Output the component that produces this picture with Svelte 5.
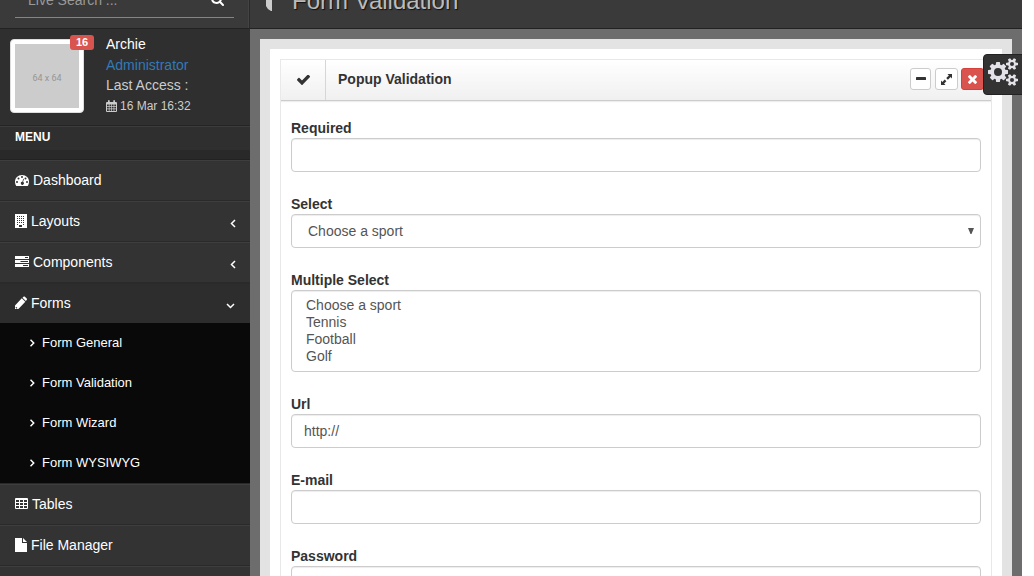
<script>
  const items = [
    { label: 'Dashboard', icon: 'dash', w: 14 },
    { label: 'Layouts', icon: 'building', w: 12, more: true },
    { label: 'Components', icon: 'tasks', w: 14, more: true },
    { label: 'Forms', icon: 'pencil', w: 12, open: true, sub: ['Form General', 'Form Validation', 'Form Wizard', 'Form WYSIWYG'] },
    { label: 'Tables', icon: 'table', w: 13 },
    { label: 'File Manager', icon: 'file', w: 12 },
    { label: '', icon: '', w: 0 }
  ];
  const options = ['Choose a sport', 'Tennis', 'Football', 'Golf'];
  const smallCog = 'v140q0 16-149 31-12 27-30 52 51 113 51 138 0 4-4 7-122 71-124 71-8 0-46-47t-52-68q-20 2-30 2t-30-2q-14 21-52 68t-46 47q-2 0-124-71-4-3-4-7 0-25 51-138-18-25-30-52-149-15-149-31v-140q0-16 149-31 13-29 30-52-51-113-51-138 0-4 4-7 4-2 35-20t59-34 30-16q8 0 46 46.500t52 67.500q20-2 30-2t30 2q51-71 92-112l6-2q4 0 124 70 4 3 4 7 0 25-51 138 17 23 30 52 149 15 149 31z';
  const bigCog = 'M1280 805v185q0 10-7 19.500t-16 10.500l-155 24q-11 35-32 76 34 48 90 115 7 11 7 20 0 12-7 19-23 30-82.500 89.500t-78.500 59.500q-11 0-21-7l-115-90q-37 19-77 31-11 108-23 155-7 24-30 24h-186q-11 0-20-7.500t-10-17.500l-23-153q-34-10-75-31l-118 89q-7 7-20 7-11 0-21-8-144-133-144-160 0-9 7-19 10-14 41-53t47-61q-23-44-35-82l-152-24q-10-1-17-9.500t-7-19.500v-185q0-10 7-19.500t16-10.500l155-24q11-35 32-76-34-48-90-115-7-11-7-20 0-12 7-20 22-30 82-89t79-59q11 0 21 7l115 90q34-18 77-32 11-108 23-154 7-24 30-24h186q11 0 20 7.500t10 17.500l23 153q34 10 75 31l118-89q8-7 20-7 11 0 21 8 144 133 144 160 0 8-7 19-12 16-42 54t-45 60q23 48 34 82l152 23q10 2 17 10.500t7 19.500zM896 896a256 256 0 1 0-512 0a256 256 0 1 0 512 0z';
</script>

{#snippet icon(name, w)}
  <svg class="ico" width={w} height="14" viewBox="0 0 {w} 14">
    {#if name === 'dash'}
      <path fill-rule="evenodd" d="M7 2a7 6.500 0 0 0-7 7c0 1.400.4 2.600 1.100 3.800.1.200.3.200.5.200h10.800c.2 0 .4 0 .5-.2.7-1.200 1.100-2.400 1.100-3.800A7 6.500 0 0 0 7 2zM2 8a1 1 0 1 1 0 2 1 1 0 0 1 0-2zM3.500 4.500a1 1 0 1 1 0 2 1 1 0 0 1 0-2zM7 3a1 1 0 1 1 0 2 1 1 0 0 1 0-2zM10.500 4.500a1 1 0 1 1 0 2 1 1 0 0 1 0-2zM12 8a1 1 0 1 1 0 2 1 1 0 0 1 0-2zM8.200 5.700l.7.200-.8 3.100a1.500 1.500 0 1 1-.7-.2z" />
    {:else if name === 'building'}
      <path fill-rule="evenodd" d="M0 0h12v14H0zM2 2v1h1V2zM4 2v1h1V2zM6 2v1h1V2zM8 2v1h1V2zM2 4v1h1V4zM4 4v1h1V4zM6 4v1h1V4zM8 4v1h1V4zM2 6v1h1V6zM4 6v1h1V6zM6 6v1h1V6zM8 6v1h1V6zM2 8v1h1V8zM4 8v1h1V8zM6 8v1h1V8zM8 8v1h1V8zM2 10v1h1v-1zM8 10v1h1v-1zM4 11v2h3v-2z" />
    {:else if name === 'tasks'}
      <path fill-rule="evenodd" d="M0 1h14v3H0zM10 2v1h3V2zM0 5h14v3H0zM5.500 6v1H13V6zM0 9h14v3H0zM8 10v1h5v-1z" />
    {:else if name === 'pencil'}
      <path fill-rule="evenodd" d="M6.800 2.300l3.500 3.500L3.400 13H0V9.500zM1 10.700l1.400 1.400-.6.500-.8-.1v-.6l-.5-.4zM7.500 1.700l1-1c.4-.4 1-.4 1.400 0L11.700 2.600c.4.400.4 1 0 1.400l-.9 1z" />
    {:else if name === 'table'}
      <path fill-rule="evenodd" d="M1 1h11q1 0 1 1v9q0 1-1 1H1q-1 0-1-1V2q0-1 1-1zM1 3v2h3V3zM5 3v2h3V3zM9 3v2h3V3zM1 6v2h3V6zM5 6v2h3V6zM9 6v2h3V6zM1 9v2h3V9zM5 9v2h3V9zM9 9v2h3V9z" />
    {:else if name === 'file'}
      <path d="M0 0h7v5h5v9H0zM8 0l4 4H8z" />
    {/if}
  </svg>
{/snippet}

<div class="page">
  <aside>
    <div class="search">
      <div class="field"><span>Live Search ...</span>
        <svg width="13" height="13" viewBox="64 128 1664 1664"><path d="M1216 832q0-185-131.500-316.500t-316.500-131.500-316.500 131.500-131.500 316.500 131.500 316.500 316.500 131.500 316.500-131.500 131.500-316.500zm512 832q0 52-38 90t-90 38q-54 0-90-38l-343-342q-179 124-399 124-143 0-273.500-55.500t-225-150-150-225-55.500-273.500 55.500-273.500 150-225 225-150 273.500-55.500 273.500 55.500 225 150 150 225 55.500 273.500q0 220-124 399l343 343q37 37 37 90z" /></svg>
      </div>
    </div>
    <div class="user">
      <div class="thumb"><div>64 x 64</div><b>16</b></div>
      <div class="info">
        <div class="name">Archie</div>
        <div class="role">Administrator</div>
        <div>Last Access :</div>
        <div class="date">
          <svg width="11" height="12" viewBox="0 0 11 12"><path fill-rule="evenodd" d="M1 2h1V.8Q2 0 2.800 0T3.700.8V2h3.600V.8Q7.300 0 8.100 0T9 .8V2h1q1 0 1 1v8q0 1-1 1H1q-1 0-1-1V3q0-1 1-1zM1 4.500v1.600h1.800V4.500zM3.500 4.500v1.600h1.700V4.500zM5.900 4.500v1.600h1.700V4.500zM8.300 4.500v1.600H10V4.500zM1 6.800v1.700h1.800V6.800zM3.500 6.800v1.700h1.700V6.800zM5.900 6.800v1.700h1.700V6.800zM8.300 6.800v1.700H10V6.800zM1 9.200V11h1.800V9.200zM3.500 9.200V11h1.700V9.200zM5.900 9.200V11h1.700V9.200zM8.300 9.200V11H10V9.200z" /></svg>
          <span>16 Mar 16:32</span>
        </div>
      </div>
    </div>
    <div class="menuhead">MENU</div>
    <div class="band"></div>
    <nav>
      {#each items as it}
        <div class="item" class:open={it.open}>
          {@render icon(it.icon, it.w)}<span>{it.label}</span>
          {#if it.more}<svg class="arrow" width="6" height="9" viewBox="0 0 6 9"><path d="M5 1L1.500 4.500 5 8" /></svg>{/if}
          {#if it.open}<svg class="arrow down" width="9" height="6" viewBox="0 0 9 6"><path d="M1 1l3.500 3.500L8 1" /></svg>{/if}
        </div>
        {#if it.sub}
          <div class="sub">
            {#each it.sub as s}
              <div><svg width="6" height="8" viewBox="0 0 6 8"><path d="M.5.800L3.700 4 .5 7.200" /></svg>{s}</div>
            {/each}
          </div>
        {/if}
      {/each}
    </nav>
  </aside>
  <main>
    <header>
      <svg width="7" height="11" viewBox="0 0 7 11"><path d="M0 0h6v11H5Q1 9 0 6z" /></svg>
      <h3>Form Validation</h3>
    </header>
    <div class="outer">
      <div class="inner">
        <section>
          <div class="head">
            <div class="check"><svg width="13" height="10" viewBox="121 378 1550 1144" preserveAspectRatio="none"><path d="M1671 566q0 40-28 68l-724 724-136 136q-28 28-68 28t-68-28l-136-136-362-362q-28-28-28-68t28-68l136-136q28-28 68-28t68 28l294 295 656-657q28-28 68-28t68 28l136 136q28 28 28 68z" /></svg></div>
            <h5>Popup Validation</h5>
            <div class="tools">
              <button aria-label="Collapse"><svg class="minus" width="10" height="3" viewBox="0 0 10 3"><rect width="10" height="3" rx=".6" /></svg></button>
              <button class="wide" aria-label="Expand"><svg width="11" height="11" viewBox="0 0 11 11"><path d="M6.500 0H11v4.500L9.600 3.100 6.900 5.800 5.200 4.100 7.900 1.400zM0 11V6.500l1.400 1.400 2.300-2.300 1.700 1.700-2.300 2.300L4.500 11z" /></svg></button>
              <button class="wide red" aria-label="Close"><svg width="9" height="9" viewBox="302 366 1188 1188"><path d="M1490 1322q0 40-28 68l-136 136q-28 28-68 28t-68-28l-294-294-294 294q-28 28-68 28t-68-28l-136-136q-28-28-28-68t28-68l294-294-294-294q-28-28-28-68t28-68l136-136q28-28 68-28t68 28l294 294 294-294q28-28 68-28t68 28l136 136q28 28 28 68t-28 68l-294 294 294 294q28 28 28 68z" /></svg></button>
            </div>
          </div>
          <div class="form">
            <div class="group"><div class="label">Required</div><div class="control"></div></div>
            <div class="group"><div class="label">Select</div><div class="control select"><span>Choose a sport</span><svg width="6" height="6" viewBox="0 0 6 6"><path d="M0 0h6L3.500 6h-1z" /></svg></div></div>
            <div class="group"><div class="label">Multiple Select</div><div class="control multi">{#each options as o}<div>{o}</div>{/each}</div></div>
            <div class="group"><div class="label">Url</div><div class="control">http://</div></div>
            <div class="group"><div class="label">E-mail</div><div class="control"></div></div>
            <div class="group"><div class="label">Password</div><div class="control"></div></div>
          </div>
        </section>
      </div>
    </div>
  </main>
  <div class="cogs">
    <svg width="30" height="28" viewBox="0 0 1920 1792"><path fill-rule="evenodd" d={bigCog} />
      <path fill-rule="evenodd" d={'M1920 1338' + smallCog + 'M1664 1408a128 128 0 1 0-256 0a128 128 0 1 0 256 0z'} />
      <path fill-rule="evenodd" d={'M1920 314' + smallCog + 'M1664 384a128 128 0 1 0-256 0a128 128 0 1 0 256 0z'} /></svg>
  </div>
</div>

<style>
  :global(body) { margin: 0; background: #fff; overflow: hidden; }
  * { box-sizing: border-box; }
  .page { position: relative; width: 1022px; height: 576px; overflow: hidden; display: flex; background: #6d6d6d; font: 14px/20px "Liberation Sans", Arial, sans-serif; color: #333; }
  svg { display: block; fill: currentColor; flex: none; }
  aside { width: 250px; flex: none; background: #2f2f2f; color: #fff; overflow: hidden; }
  .search { height: 29px; padding: 0 14px 0 15px; background: #3a3a3a; border-bottom: 1px solid #222; border-right: 1px solid #2a2a2a; box-shadow: inset -1px 0 #444; overflow: hidden; }
  .field { width: 219px; height: 18px; border-bottom: 1px solid #858585; color: #999; padding: 0 10px 0 13px; display: flex; justify-content: space-between; }
  .field span { margin-top: -10px; }
  .field svg { color: #fff; margin-top: -7px; }
  .user { height: 97px; display: flex; padding: 10px; gap: 22px; border-bottom: 1px solid #252525; }
  .thumb { position: relative; width: 74px; height: 74px; background: #fff; border: 1px solid #ddd; border-radius: 4px; padding: 4px; }
  .thumb div { height: 64px; background: #ccc; color: #969696; font: 9px/68px Roboto, sans-serif; text-align: center; }
  .thumb b { position: absolute; top: -5px; left: 59px; width: 24px; height: 15px; background: #d9534f; border-radius: 3px; color: #fff; font-size: 11px; line-height: 15px; text-align: center; }
  .info { margin-top: -5px; color: #ccc; line-height: 20.600px; }
  .name { color: #fff; }
  .role { color: #337ab7; }
  .date { display: flex; gap: 3px; align-items: center; font-size: 12px; }
  .menuhead { height: 24px; border-top: 1px solid #3c3c3c; padding-left: 15px; font-size: 12px; font-weight: bold; line-height: 21px; }
  .band { height: 10px; background: #292929; border-bottom: 1px solid #222; }
  .item { height: 41px; padding: 0 14px 2px 15px; border-top: 1px solid #3e3e3e; border-bottom: 1px solid #2a2a2a; background: #333; display: flex; align-items: center; }
  .item span { margin-left: 4px; }
  .item .arrow { margin-left: auto; margin-top: 5px; }
  .item .down { margin-right: 1px; }
  .arrow path, .sub path { fill: none; stroke: #fff; stroke-width: 1.500; }
  .item.open { background: #2d2d2d; border-color: #2a2a2a #2d2d2d #2d2d2d; height: 40px; padding-bottom: 0; }
  .sub { background: #090909; border-bottom: 1px solid #292929; }
  .sub div { height: 40px; padding-left: 30px; display: flex; gap: 6px; align-items: center; font-size: 13px; }
  main { flex: 1; min-width: 0; }
  header { height: 29px; background: #3a3a3a; border-bottom: 1px solid #222; display: flex; padding-left: 16px; gap: 19px; color: #ccc; }
  h3 { margin: -13px 0 0; font-size: 24px; line-height: 28px; font-weight: 400; color: #bbb; text-shadow: 1px 1px 1px #111; }
  .outer { margin: 10px 10px 0; padding: 10px 10px 0; background: #e3e3e3; }
  .inner { background: #fff; padding: 10px 10px 0; height: 560px; }
  section { border: 1px solid #e8e8e8; height: 560px; }
  .head { height: 41px; display: flex; align-items: center; border-bottom: 1px solid #ccc; background: linear-gradient(#fff, #f0f0f0); box-shadow: 0 1px 1px #eee; }
  .check { width: 45px; height: 40px; border-right: 1px solid #d6d6d6; display: grid; place-items: center; }
  h5 { margin: -2px 0 0 12px; font-size: 14px; line-height: 20px; }
  .tools { display: flex; gap: 4px; margin: -2px 7px 0 auto; }
  button { width: 21px; height: 22px; padding: 0; border: 1px solid #ccc; border-radius: 3px; background: #fff; color: #333; display: grid; place-items: center; }
  .minus { margin-bottom: 1px; }
  .wide { width: 23px; }
  .tools .red { margin-left: -1px; padding-right: 1px; background: #d9534f; border-color: #d43f3a; color: #fff; }
  .form { padding: 17px 10px; }
  .group { margin-bottom: 22px; }
  .label { font-weight: bold; }
  .control { height: 34px; border: 1px solid #ccc; border-radius: 4px; padding: 6px 12px; color: #555; box-shadow: inset 0 1px 1px rgba(0, 0, 0, .075); }
  .select { padding: 6px 6px 6px 16px; display: flex; justify-content: space-between; align-items: center; }
  .multi { height: 82px; padding: 6px 14px; line-height: 17px; }
  .cogs { position: absolute; left: 983px; top: 54px; width: 40px; height: 41px; background: #333; border: 1px solid #222; border-radius: 4px 0 0 4px; padding: 3px 4px; color: #e2e2e8; }
</style>
